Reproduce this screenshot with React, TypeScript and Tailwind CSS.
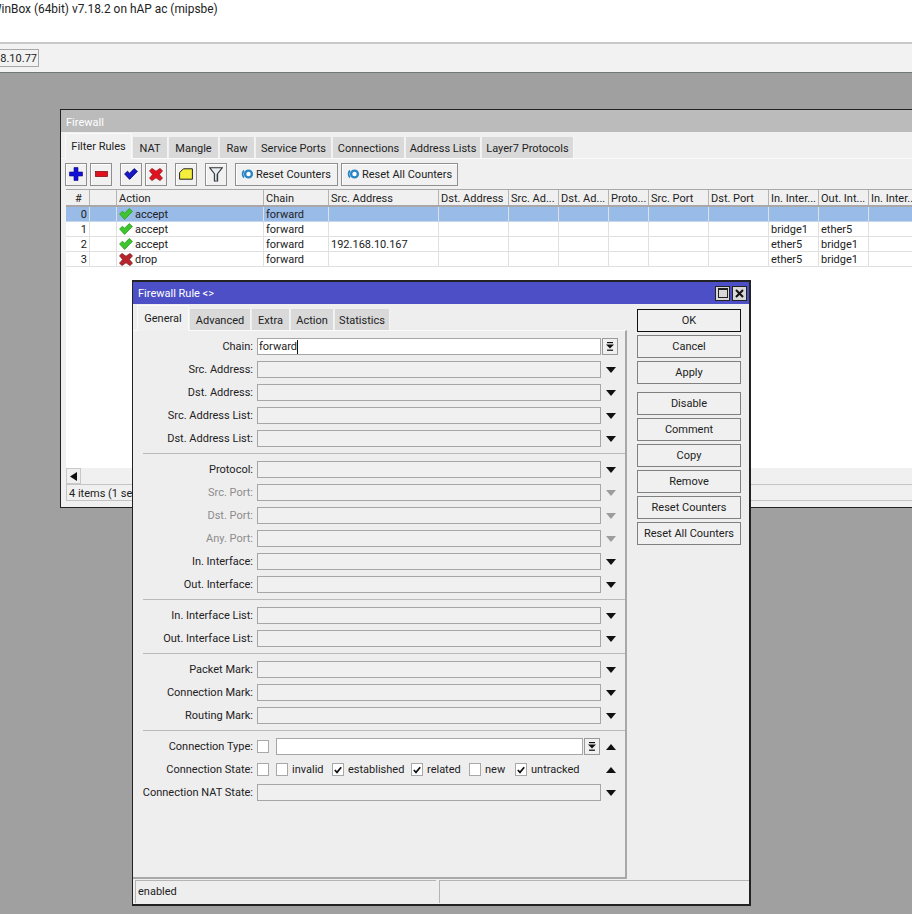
import React from 'react';

const font = "font-['Roboto','Liberation_Sans',Arial,sans-serif]";

const columns = [
  { label: '#', w: 'w-[24px]', align: 'text-center' },
  { label: '', w: 'w-[27px]', align: '' },
  { label: 'Action', w: 'w-[147px]', align: '' },
  { label: 'Chain', w: 'w-[65px]', align: '' },
  { label: 'Src. Address', w: 'w-[110px]', align: '' },
  { label: 'Dst. Address', w: 'w-[70px]', align: '' },
  { label: 'Src. Ad...', w: 'w-[50px]', align: '' },
  { label: 'Dst. Ad...', w: 'w-[50px]', align: '' },
  { label: 'Proto...', w: 'w-[40px]', align: '' },
  { label: 'Src. Port', w: 'w-[60px]', align: '' },
  { label: 'Dst. Port', w: 'w-[60px]', align: '' },
  { label: 'In. Inter...', w: 'w-[50px]', align: '' },
  { label: 'Out. Int...', w: 'w-[50px]', align: '' },
  { label: 'In. Inter...', w: 'w-[50px]', align: '' },
];

const rules = [
  { n: '0', action: 'accept', src: '', inI: '', outI: '', selected: true },
  { n: '1', action: 'accept', src: '', inI: 'bridge1', outI: 'ether5', selected: false },
  { n: '2', action: 'accept', src: '192.168.10.167', inI: 'ether5', outI: 'bridge1', selected: false },
  { n: '3', action: 'drop', src: '', inI: 'ether5', outI: 'bridge1', selected: false },
];

const CheckIcon = ({ color = '#3fc52f', dark = '#2a9a20' }: { color?: string; dark?: string }) => (
  <svg width="14" height="12" viewBox="0 0 14 12" className="shrink-0">
    <path d="M0.6 6 L3.4 3.2 L5.6 5.2 L10.2 0.6 L13.4 3.4 L5.6 11.4 Z" fill={color} stroke={dark} strokeWidth="0.8" strokeLinejoin="round" />
  </svg>
);

const CrossIcon = ({ color = '#c8242c', dark = '#8a1c20' }: { color?: string; dark?: string }) => (
  <svg width="14" height="13" viewBox="0 0 14 13" className="shrink-0">
    <path d="M0.5 2.8 L3 0.4 L7 3.2 L11 0.4 L13.5 2.8 L10.4 6.5 L13.5 10.2 L11 12.6 L7 9.8 L3 12.6 L0.5 10.2 L3.6 6.5 Z" fill={color} stroke={dark} strokeWidth="0.7" strokeLinejoin="round" />
  </svg>
);

const ResetIcon = () => (
  <svg width="14" height="12" viewBox="0 0 14 12" className="shrink-0">
    <circle cx="8.5" cy="6" r="3.4" fill="#fff" stroke="#2b86c5" strokeWidth="2.4" />
    <path d="M3.4 1.8 A6 6 0 0 0 3.4 10.2 L4.6 8.8 A4.4 4.4 0 0 1 4.6 3.2 Z" fill="#2b86c5" />
  </svg>
);

const ToolButton = ({ children, className = 'w-[22px]' }: { children: React.ReactNode; className?: string }) => (
  <div className={`${className} h-[23px] flex items-center justify-center border border-[#8f8f8f] bg-[#f1f1f1] shadow-[inset_1px_1px_0_#fff]`}>
    {children}
  </div>
);

const ResetButton = ({ label, className }: { label: string; className: string }) => (
  <div className={`${className} h-[23px] pl-[4px] flex items-center gap-[2px] whitespace-nowrap border border-[#8f8f8f] bg-[#f1f1f1] shadow-[inset_1px_1px_0_#fff]`}>
    <ResetIcon />
    <span className="pt-px">{label}</span>
  </div>
);

const Arrow = ({ up = false, gray = false }: { up?: boolean; gray?: boolean }) => (
  <svg width="10" height="6" viewBox="0 0 10 6" className="shrink-0">
    <path d={up ? 'M0 6 L5 0 L10 6 Z' : 'M0 0 L10 0 L5 6 Z'} fill={gray ? '#9c9c9c' : '#111'} />
  </svg>
);

const DropButton = () => (
  <div className="w-[16px] h-[17px] flex items-center justify-center border border-[#9a9a9a] bg-[#f0f0f0]">
    <svg width="8" height="9" viewBox="0 0 8 9">
      <rect x="1" y="0" width="6" height="1.2" fill="#111" />
      <path d="M0 2.6 L8 2.6 L4 6.6 Z" fill="#111" />
      <rect x="1" y="7.6" width="6" height="1.2" fill="#111" />
    </svg>
  </div>
);

const Checkbox = ({ checked = false }: { checked?: boolean }) => (
  <div className="w-[12px] h-[13px] shrink-0 flex items-center justify-center border border-[#a8a8a8] bg-white">
    {checked && (
      <svg width="8" height="8" viewBox="0 0 8 8">
        <path d="M0.8 4 L3 6.4 L7.2 1.2" fill="none" stroke="#111" strokeWidth="1.7" />
      </svg>
    )}
  </div>
);

const Row = ({ label, disabled = false, children }: { label: string; disabled?: boolean; children: React.ReactNode }) => (
  <div className="flex items-center h-[17px] mb-[6px]">
    <div className={`w-[123px] pr-[4px] text-right whitespace-nowrap ${disabled ? 'text-[#8c8c8c]' : ''}`}>{label}</div>
    {children}
  </div>
);

const ArrowField = ({ label, disabled = false }: { label: string; disabled?: boolean }) => (
  <Row label={label} disabled={disabled}>
    <div className="w-[344px] h-[17px] border border-[#a6a6a6] bg-[#f0f0f0]" />
    <div className="w-[20px] flex justify-center">
      <Arrow gray={disabled} />
    </div>
  </Row>
);

const Sep = () => <div className="h-px ml-[9px] mb-[7px] bg-[#b9b9b9]" />;

const StateOption = ({ label, w, checked = false }: { label: string; w: string; checked?: boolean }) => (
  <div className={`${w} shrink-0 flex items-center gap-[4px]`}>
    <Checkbox checked={checked} />
    <span>{label}</span>
  </div>
);

const Tab = ({ label, w, active = false }: { label: string; w: string; active?: boolean }) => (
  <div
    className={`${w} shrink-0 flex items-center justify-center whitespace-nowrap ${
      active ? 'h-[26px] bg-[#f0f0f0] border-t border-x border-[#fafafa] relative z-10 -mb-px' : 'h-[21px] pt-[3px] bg-[#d9d9d9] border-r border-[#f4f4f4]'
    }`}
  >
    {label}
  </div>
);

const actionButtons = [
  ['OK', 'Cancel', 'Apply'],
  ['Disable', 'Comment', 'Copy', 'Remove', 'Reset Counters', 'Reset All Counters'],
];

const App: React.FC = () => {
  return (
    <div className={`${font} relative w-[912px] h-[914px] overflow-hidden flex flex-col text-[11px] leading-[14px] text-[#222] bg-[#a0a0a0]`}>
      <div className="h-[44px] bg-white border-b-2 border-[#c8c8c8] pt-[2px] overflow-hidden whitespace-nowrap text-[11.9px]">
        <span className="block -ml-[9px]">WinBox (64bit) v7.18.2 on hAP ac (mipsbe)</span>
      </div>
      <div className="h-[29px] bg-[#f2f2f2] border-b border-[#707878] flex items-center">
        <div className="w-[39px] h-[18px] pt-px flex justify-end items-center overflow-hidden border border-[#a8a8a8] border-l-0 pr-[1px] whitespace-nowrap">
          192.168.10.77
        </div>
      </div>

      {/* Firewall window */}
      <div className="absolute left-[60px] top-[109px] w-[870px] h-[399px] border border-[#222] bg-[#f0f0f0] flex flex-col">
        <div className="h-[22px] shrink-0 bg-[#bbbbbb] pl-[5px] pt-[3px] flex items-center text-white">Firewall</div>
        <div className="h-[27px] shrink-0 px-[4px] flex items-end gap-px border-b border-[#fafafa]">
          <Tab label="Filter Rules" w="w-[67px]" active />
          <Tab label="NAT" w="w-[35px]" />
          <Tab label="Mangle" w="w-[50px]" />
          <Tab label="Raw" w="w-[35px]" />
          <Tab label="Service Ports" w="w-[76px]" />
          <Tab label="Connections" w="w-[72px]" />
          <Tab label="Address Lists" w="w-[75px]" />
          <Tab label="Layer7 Protocols" w="w-[92px]" />
        </div>
        <div className="h-[30px] shrink-0 pl-[4px] flex items-center">
          <ToolButton>
            <svg width="14" height="14" viewBox="0 0 14 14">
              <path d="M5 0.5 H9 V5 H13.5 V9 H9 V13.5 H5 V9 H0.5 V5 H5 Z" fill="#1010d8" stroke="#08087a" strokeWidth="0.6" />
            </svg>
          </ToolButton>
          <ToolButton className="w-[22px] ml-[3px]">
            <svg width="13" height="6" viewBox="0 0 13 6">
              <rect x="0.4" y="0.4" width="12.2" height="5.2" fill="#e0101c" stroke="#7a0a10" strokeWidth="0.7" />
            </svg>
          </ToolButton>
          <ToolButton className="w-[22px] ml-[8px]">
            <CheckIcon color="#1818c8" dark="#0a0a70" />
          </ToolButton>
          <ToolButton className="w-[22px] ml-[3px]">
            <CrossIcon color="#e01420" dark="#8a1016" />
          </ToolButton>
          <ToolButton className="w-[22px] ml-[8px]">
            <svg width="14" height="12" viewBox="0 0 14 12">
              <path d="M0.6 4.6 L4.4 0.8 H13.4 V11.2 H0.6 Z" fill="#f4ee3c" stroke="#222" strokeWidth="1" />
            </svg>
          </ToolButton>
          <ToolButton className="w-[22px] ml-[8px]">
            <svg width="14" height="15" viewBox="0 0 14 15">
              <path d="M0.8 0.8 H13.2 L8.6 6.6 V14 H5.4 V6.6 Z" fill="#e8eef2" stroke="#333" strokeWidth="1.1" />
              <path d="M8 7 V13.4 H6.8 V7 Z" fill="#9fb0ba" />
            </svg>
          </ToolButton>
          <ResetButton label="Reset Counters" className="w-[103px] ml-[8px]" />
          <ResetButton label="Reset All Counters" className="w-[117px] ml-[3px]" />
        </div>

        {/* Rule table */}
        <div className="ml-[5px] flex-1 min-h-0 bg-white flex flex-col overflow-hidden">
          <div className="flex h-[18px] shrink-0 bg-[#f0f0f0] border-y border-[#a8a8a8] border-b-2">
            {columns.map((c, i) => (
              <div key={i} className={`${c.w} ${c.align} shrink-0 pl-[2px] border-r border-[#b4b4b4] whitespace-nowrap overflow-hidden leading-[17px]`}>
                {c.label}
              </div>
            ))}
          </div>
          {rules.map((r) => (
            <div key={r.n} className={`flex h-[15px] shrink-0 leading-[15px] border-b ${r.selected ? 'bg-[#99bbe8] border-[#c4d6ee]' : 'bg-white border-[#e0e0e0]'}`}>
              <div className="w-[24px] shrink-0 pr-[2px] text-right border-r border-[#e0e0e0]">{r.n}</div>
              <div className="w-[27px] shrink-0 border-r border-[#e0e0e0]" />
              <div className="w-[147px] shrink-0 pl-[2px] flex items-center gap-[2px] border-r border-[#e0e0e0]">
                {r.action === 'accept' ? <CheckIcon /> : <CrossIcon color="#b8242c" dark="#7a1a20" />}
                <span>{r.action}</span>
              </div>
              <div className="w-[65px] shrink-0 pl-[2px] border-r border-[#e0e0e0]">forward</div>
              <div className="w-[110px] shrink-0 pl-[2px] border-r border-[#e0e0e0]">{r.src}</div>
              {['w-[70px]', 'w-[50px]', 'w-[50px]', 'w-[40px]', 'w-[60px]', 'w-[60px]'].map((w, i) => (
                <div key={i} className={`${w} shrink-0 border-r border-[#e0e0e0]`} />
              ))}
              <div className="w-[50px] shrink-0 pl-[2px] border-r border-[#e0e0e0]">{r.inI}</div>
              <div className="w-[50px] shrink-0 pl-[2px] border-r border-[#e0e0e0]">{r.outI}</div>
              <div className="w-[50px] shrink-0" />
            </div>
          ))}
        </div>
        <div className="ml-[5px] h-[16px] shrink-0 bg-[#f0f0f0] flex">
          <div className="w-[15px] flex items-center justify-center border border-[#c8c8c8]">
            <svg width="7" height="9" viewBox="0 0 7 9">
              <path d="M7 0 V9 L0 4.5 Z" fill="#111" />
            </svg>
          </div>
        </div>
        <div className="ml-[5px] mb-[6px] h-[17px] shrink-0 border border-[#c4c4c4] pl-[2px] leading-[17px] whitespace-nowrap">4 items (1 selected)</div>
      </div>

      {/* Firewall Rule dialog */}
      <div className="absolute left-[132px] top-[280px] w-[619px] h-[626px] border-2 border-[#222] border-l-[1px] bg-[#efeeef] flex flex-col">
        <div className="h-[22px] shrink-0 bg-[#4c4fc6] pl-[5px] pr-[2px] flex items-center justify-between text-white">
          <span className="pt-px">Firewall Rule &lt;&gt;</span>
          <div className="flex gap-[2px]">
            <div className="w-[15px] h-[15px] bg-[#d8d8d8] border border-[#222] flex items-center justify-center">
              <div className="w-[10px] h-[10px] border border-[#222] border-t-2" />
            </div>
            <div className="w-[15px] h-[15px] bg-[#d8d8d8] border border-[#222] flex items-center justify-center">
              <svg width="9" height="9" viewBox="0 0 9 9">
                <path d="M1 1 L8 8 M8 1 L1 8" stroke="#111" strokeWidth="2" />
              </svg>
            </div>
          </div>
        </div>
        <div className="flex flex-1 min-h-0">
          <div className="w-[494px] shrink-0 flex flex-col">
            <div className="h-[26px] shrink-0 pl-[4px] flex items-end gap-px">
              <Tab label="General" w="w-[52px]" active />
              <Tab label="Advanced" w="w-[61px]" />
              <Tab label="Extra" w="w-[38px]" />
              <Tab label="Action" w="w-[43px]" />
              <Tab label="Statistics" w="w-[55px]" />
            </div>
            <div className="flex-1 pt-[7px] pl-[1px] border-t border-[#fafafa] border-r-2 border-b-2 border-r-[#a8a8a8] border-b-[#a8a8a8]">
              <Row label="Chain:">
                <div className="w-[344px] h-[17px] border border-[#a6a6a6] bg-white flex items-center pl-[1px]">
                  <span className="border-r border-[#111] leading-[14px]">forward</span>
                </div>
                <div className="w-[1px]" />
                <DropButton />
              </Row>
              <ArrowField label="Src. Address:" />
              <ArrowField label="Dst. Address:" />
              <ArrowField label="Src. Address List:" />
              <ArrowField label="Dst. Address List:" />
              <Sep />
              <ArrowField label="Protocol:" />
              <ArrowField label="Src. Port:" disabled />
              <ArrowField label="Dst. Port:" disabled />
              <ArrowField label="Any. Port:" disabled />
              <ArrowField label="In. Interface:" />
              <ArrowField label="Out. Interface:" />
              <Sep />
              <ArrowField label="In. Interface List:" />
              <ArrowField label="Out. Interface List:" />
              <Sep />
              <ArrowField label="Packet Mark:" />
              <ArrowField label="Connection Mark:" />
              <ArrowField label="Routing Mark:" />
              <Sep />
              <Row label="Connection Type:">
                <Checkbox />
                <div className="w-[307px] h-[17px] ml-[7px] mr-px border border-[#a6a6a6] bg-white" />
                <DropButton />
                <div className="w-[21px] flex justify-center">
                  <Arrow up />
                </div>
              </Row>
              <Row label="Connection State:">
                <Checkbox />
                <div className="w-[325px] ml-[7px] flex items-center">
                  <StateOption label="invalid" w="w-[56px]" />
                  <StateOption label="established" w="w-[79px]" checked />
                  <StateOption label="related" w="w-[58px]" checked />
                  <StateOption label="new" w="w-[46px]" />
                  <StateOption label="untracked" w="w-[65px]" checked />
                </div>
                <div className="w-[20px] flex justify-center">
                  <Arrow up />
                </div>
              </Row>
              <ArrowField label="Connection NAT State:" />
            </div>
          </div>
          <div className="ml-[10px] pt-[5px] w-[104px] flex flex-col gap-[8px]">
            {actionButtons.map((group, g) => (
              <div key={g} className="flex flex-col gap-[3px]">
                {group.map((b) => (
                  <div
                    key={b}
                    className={`h-[23px] flex items-center justify-center border whitespace-nowrap ${b === 'OK' ? 'border-[#111]' : 'border-[#808080]'} bg-[#f0f0f0]`}
                  >
                    {b}
                  </div>
                ))}
              </div>
            ))}
          </div>
        </div>
        <div className="h-[23px] shrink-0 mt-[1px] mb-[1px] flex gap-[3px] pl-[2px]">
          <div className="w-[301px] border-l border-t border-[#b4b4b4] pl-[2px] leading-[21px]">enabled</div>
          <div className="flex-1 border-l border-t border-[#b4b4b4]" />
        </div>
      </div>
    </div>
  );
};

export default App;
